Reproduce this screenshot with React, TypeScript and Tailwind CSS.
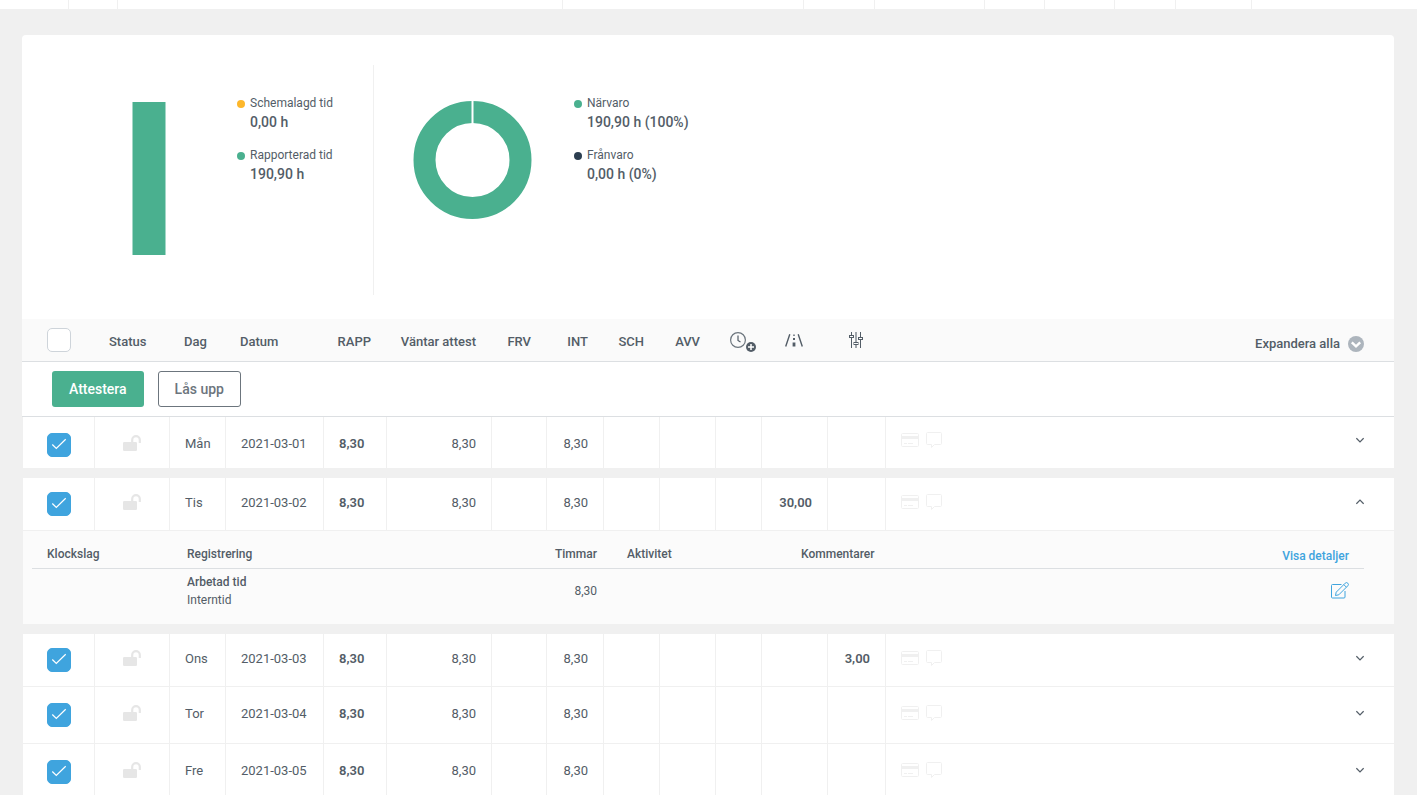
import { useState } from 'react';
import type { ReactNode } from 'react';

interface DayRow {
  id: number;
  day: string;
  date: string;
  reported: string;
  waiting: string;
  internal: string;
  mileage?: string;
  adjustment?: string;
}

const DAYS: DayRow[] = [
  { id: 1, day: 'Mån', date: '2021-03-01', reported: '8,30', waiting: '8,30', internal: '8,30' },
  { id: 2, day: 'Tis', date: '2021-03-02', reported: '8,30', waiting: '8,30', internal: '8,30', mileage: '30,00' },
  { id: 3, day: 'Ons', date: '2021-03-03', reported: '8,30', waiting: '8,30', internal: '8,30', adjustment: '3,00' },
  { id: 4, day: 'Tor', date: '2021-03-04', reported: '8,30', waiting: '8,30', internal: '8,30' },
  { id: 5, day: 'Fre', date: '2021-03-05', reported: '8,30', waiting: '8,30', internal: '8,30' },
];

const COLUMN_WIDTHS = [
  'w-[73px]', 'w-[75px]', 'w-[56px]', 'w-[98px]', 'w-[63px]', 'w-[105px]', 'w-[55px]',
  'w-[57px]', 'w-[56px]', 'w-[56px]', 'w-[46px]', 'w-[66px]', 'w-[58px]', '',
];

// Columns of the table that ends above the panel
const TOP_COLUMNS = [
  'w-[69px]', 'w-[49px]', 'w-[445px]', 'w-[241px]', 'w-[71px]',
  'w-[110px]', 'w-[60px]', 'w-[70px]', 'w-[61px]', 'w-[76px]',
];

export default function App() {
  const [selected, setSelected] = useState<number[]>(DAYS.map(d => d.id));
  const [openId, setOpenId] = useState<number | null>(2);
  const openIndex = DAYS.findIndex(d => d.id === openId);

  const toggleSelected = (id: number) => {
    setSelected(prev => prev.includes(id) ? prev.filter(s => s !== id) : [...prev, id]);
  };

  return (
    <div className="h-screen overflow-hidden bg-[#f0f0f0] font-['Roboto',sans-serif] text-[13px] leading-[22px] text-[#535d67]">
      <div className="flex h-[9px] bg-white">
        {TOP_COLUMNS.map((width, i) => (
          <div key={i} className={`${width} shrink-0 border-r border-[#f0f0f0]`} />
        ))}
      </div>

      <main className="mx-[22px] mt-[26px] mr-[23px] rounded-t bg-white">
        {/* Summary */}
        <section className="flex pt-[30px] pb-6">
          <div className="flex h-[230px] w-[352px] items-start gap-[71px] border-r border-[#f0f0f0] pt-[37px] pl-[110px]">
            <svg width="34" height="153" aria-label="Rapporterad tid">
              <rect x=".5" width="33" height="153" fill="#4ab08f" />
            </svg>
            <Legend items={[
              { color: 'bg-[#fdb72b]', label: 'Schemalagd tid', value: '0,00 h' },
              { color: 'bg-[#4ab08f]', label: 'Rapporterad tid', value: '190,90 h' },
            ]} />
          </div>
          <div className="flex items-start gap-[42px] pt-[37px] pl-[39px]">
            <svg width="119" height="118" viewBox="0 0 119 118" className="overflow-visible" aria-label="Närvaro">
              <circle cx="59.5" cy="58" r="48" fill="none" stroke="#4ab08f" strokeWidth="22" />
              <path d="M59.5-2v25" stroke="#fff" strokeWidth="2" />
            </svg>
            <Legend items={[
              { color: 'bg-[#4ab08f]', label: 'Närvaro', value: '190,90 h (100%)' },
              { color: 'bg-[#2c3e50]', label: 'Frånvaro', value: '0,00 h (0%)' },
            ]} />
          </div>
        </section>

        <table className="w-full table-fixed border-separate border-spacing-0 text-left">
          <colgroup>
            {COLUMN_WIDTHS.map((width, i) => <col key={i} className={width} />)}
          </colgroup>
          <thead>
            <tr>
              <HeadCell icon>
                <div className="pl-[11px]">
                  <Checkbox
                    label="Markera alla"
                    checked={false}
                    onChange={() => setSelected(selected.length === DAYS.length ? [] : DAYS.map(d => d.id))}
                  />
                </div>
              </HeadCell>
              <HeadCell>Status</HeadCell>
              <HeadCell>Dag</HeadCell>
              <HeadCell>Datum</HeadCell>
              <HeadCell right>RAPP</HeadCell>
              <HeadCell right>Väntar attest</HeadCell>
              <HeadCell right>FRV</HeadCell>
              <HeadCell right>INT</HeadCell>
              <HeadCell right>SCH</HeadCell>
              <HeadCell right>AVV</HeadCell>
              <HeadCell icon><ClockPlusIcon /></HeadCell>
              <HeadCell icon><div className="flex justify-center"><RoadIcon /></div></HeadCell>
              <HeadCell icon><div className="flex justify-center"><SlidersIcon /></div></HeadCell>
              <th className="h-[43px] border-b border-[#dcdfe2] bg-[#fafafa] pt-[7px] pr-[30px]">
                <button className="ml-auto flex items-center gap-2 font-medium">
                  Expandera alla
                  <svg width="16" height="16" viewBox="0 0 16 16" fill="none">
                    <circle cx="8" cy="8" r="8" fill="#adb5bd" />
                    <path d="M3.8 6.3L8 10.400l4.200-4.100" stroke="#fff" strokeWidth="2.4" />
                  </svg>
                </button>
              </th>
            </tr>
            <tr>
              <td colSpan={14} className="h-[55px] border-b border-[#dcdfe2] pl-[30px]">
                <div className="flex gap-[14px] text-sm font-medium">
                  <button className="h-9 rounded-[3px] bg-[#4ab08f] px-[17px] pb-px text-white">Attestera</button>
                  <button className="h-9 rounded-[3px] border border-[#6c757d] px-4 pb-px text-[#6c757d]">Lås upp</button>
                </div>
              </td>
            </tr>
          </thead>

          {DAYS.map((row, index) => (
            <tbody key={row.id}>
              {index === openIndex && <GapRow />}
              <DayCells
                row={row}
                checked={selected.includes(row.id)}
                open={index === openIndex}
                beforeOpen={index === openIndex - 1}
                afterOpen={openIndex >= 0 && index === openIndex + 1}
                onCheck={() => toggleSelected(row.id)}
                onToggle={() => setOpenId(row.id === openId ? null : row.id)}
              />
              {index === openIndex && <DetailRow />}
              {index === openIndex && <GapRow />}
            </tbody>
          ))}
        </table>
      </main>
    </div>
  );
}

function Legend({ items }: { items: { color: string; label: string; value: string }[] }) {
  return (
    <ul className="-mt-2 space-y-[14px]">
      {items.map(item => (
        <li key={item.label}>
          <p className="flex items-center gap-[5px] text-xs leading-[19px]">
            <span className={`size-2 rounded-full ${item.color}`} />
            {item.label}
          </p>
          <p className="pl-[13px] text-sm leading-[19px] font-medium">{item.value}</p>
        </li>
      ))}
    </ul>
  );
}

function HeadCell({ children, right, icon }: { children: ReactNode; right?: boolean; icon?: boolean }) {
  return (
    <th className={`h-[43px] border-b border-[#dcdfe2] bg-[#fafafa] font-medium whitespace-nowrap ${right ? 'pr-4 text-right' : 'px-[14px]'} ${icon ? '' : 'pt-1'}`}>
      {children}
    </th>
  );
}

interface DayCellsProps {
  row: DayRow;
  checked: boolean;
  open: boolean;
  beforeOpen: boolean;
  afterOpen: boolean;
  onCheck: () => void;
  onToggle: () => void;
}

function DayCells({ row, checked, open, beforeOpen, afterOpen, onCheck, onToggle }: DayCellsProps) {
  const compact = open || afterOpen;
  const height = beforeOpen ? 'h-[51px]' : compact ? 'h-[53px] border-b' : 'h-[57px] border-b';
  const padding = compact ? 'pt-[14px]' : 'pt-4';
  const cell = `${height} ${padding} border-r border-[#f0f0f0] px-[15px] align-top`;

  return (
    <tr>
      <td className={`${cell} border-l`}>
        <div className="pl-[9px]">
          <Checkbox label={`Markera ${row.date}`} checked={checked} onChange={onCheck} />
        </div>
      </td>
      <td className={cell}><div className="flex justify-center pt-[2px]"><UnlockIcon /></div></td>
      <td className={cell}>{row.day}</td>
      <td className={cell}>{row.date}</td>
      <td className={`${cell} font-semibold`}>{row.reported}</td>
      <td className={`${cell} text-right`}>{row.waiting}</td>
      <td className={cell} />
      <td className={`${cell} text-right`}>{row.internal}</td>
      <td className={cell} />
      <td className={cell} />
      <td className={cell} />
      <td className={`${cell} text-right font-semibold`}>{row.mileage}</td>
      <td className={`${cell} text-right font-semibold`}>{row.adjustment}</td>
      <td className={`${height} ${beforeOpen ? 'pt-[13px]' : padding} border-[#f0f0f0] pr-[30px] pl-[15px] align-top`}>
        <div className="flex h-5 items-center gap-[7px]">
          <CardIcon />
          <CommentIcon />
          <button className="ml-auto" onClick={onToggle} aria-expanded={open} aria-label={`Visa ${row.date}`}>
            <svg width="8" height="6" viewBox="0 0 8 6" fill="none" stroke="#535d67" strokeWidth="1.2">
              <path d={open ? 'M.4 4.8L4 1.200l3.600 3.600' : 'M.4 1.200L4 4.800l3.600-3.600'} />
            </svg>
          </button>
        </div>
      </td>
    </tr>
  );
}

function GapRow() {
  return (
    <tr>
      <td colSpan={14} className="h-[10px] bg-[#f0f0f0] p-0" />
    </tr>
  );
}

function DetailRow() {
  return (
    <tr>
      <td colSpan={14} className="h-[93px] border-l border-[#f0f0f0] bg-[#fbfbfb] pr-[30px] pl-[9px] align-top text-xs leading-[18px]">
        <table className="w-full table-fixed border-separate border-spacing-0">
          <colgroup>
            <col className="w-[140px]" />
            <col className="w-[300px]" />
            <col className="w-[140px]" />
            <col className="w-[174px]" />
            <col />
            <col className="w-[140px]" />
          </colgroup>
          <thead>
            <tr className="*:h-[38px] *:border-b *:border-[#dcdfe2] *:px-[15px] *:pt-2 *:font-medium">
              <th>Klockslag</th>
              <th>Registrering</th>
              <th className="text-right">Timmar</th>
              <th>Aktivitet</th>
              <th>Kommentarer</th>
              <th className="pb-[3px] text-right align-bottom">
                <a href="#detaljer" className="text-[#3fa4de]">Visa detaljer</a>
              </th>
            </tr>
          </thead>
          <tbody>
            <tr className="*:px-[15px] *:pt-1">
              <td />
              <td>
                <p className="font-medium">Arbetad tid</p>
                <p>Interntid</p>
              </td>
              <td className="text-right">8,30</td>
              <td />
              <td />
              <td>
                <button className="ml-auto block pb-px" aria-label="Redigera"><EditIcon /></button>
              </td>
            </tr>
          </tbody>
        </table>
      </td>
    </tr>
  );
}

function Checkbox({ label, checked, onChange }: { label: string; checked: boolean; onChange: () => void }) {
  return (
    <label className="grid size-6 place-items-center">
      <input type="checkbox" aria-label={label} checked={checked} onChange={onChange}
        className="[grid-area:1/1] size-6 appearance-none rounded-[5px] border border-[#ced4da] bg-white checked:border-[#3fa4de] checked:bg-[#3fa4de]" />
      {checked && (
        <svg className="pointer-events-none z-10 [grid-area:1/1]" width="16" height="14" viewBox="0 0 16 14" fill="none">
          <path d="M1.3 6.500l4 4L14.700 1.200" stroke="#fff" strokeWidth="1.2" />
        </svg>
      )}
    </label>
  );
}

function UnlockIcon() {
  return (
    <svg width="18" height="16" viewBox="0 0 18 16" fill="none">
      <rect y="7" width="14" height="9" rx="1.2" fill="#e6e6e6" />
      <path d="M9.2 7.5V4.9a3.8 3.8 0 0 1 7.6 0v3" stroke="#e6e6e6" strokeWidth="2.2" />
    </svg>
  );
}

function CardIcon() {
  return (
    <svg width="18" height="14" viewBox="0 0 18 14" fill="none" stroke="#f0f0f0">
      <rect x=".5" y=".5" width="17" height="13" rx="1" />
      <path d="M0 4.500h18" strokeWidth="3" />
      <path d="M3 10.500h3M7 10.500h5" />
    </svg>
  );
}

function CommentIcon() {
  return (
    <svg width="16" height="16" viewBox="0 0 16 16" fill="none" stroke="#f0f0f0">
      <path d="M1.5.5h13a1 1 0 0 1 1 1v10a1 1 0 0 1-1 1H8.500l-3 3v-3h-4a1 1 0 0 1-1-1v-10a1 1 0 0 1 1-1z" />
    </svg>
  );
}

function ClockPlusIcon() {
  return (
    <svg width="26" height="20" viewBox="0 0 26 20" fill="none" className="mt-[3px]">
      <circle cx="8" cy="8" r="7.400" stroke="#6c757d" strokeWidth="1.2" />
      <path d="M8 3.500v5l2.500 1.500" stroke="#535d67" strokeWidth="1.200" />
      <circle cx="21" cy="15" r="5" fill="#535d67" />
      <path d="M21 12v6M18 15h6" stroke="#fff" strokeWidth="1.500" />
    </svg>
  );
}

function RoadIcon() {
  return (
    <svg width="20" height="13" viewBox="0 0 20 13" fill="none" stroke="#535d67">
      <path d="M4.800.300L.700 12.500M13.200.300l4.100 12.200" strokeWidth="1.400" />
      <path d="M9 .500v1.500" strokeWidth="1.400" />
      <path d="M9 4v2" strokeWidth="2" />
      <path d="M9 8.500v4" strokeWidth="2.800" />
    </svg>
  );
}

function SlidersIcon() {
  return (
    <svg width="16" height="16" viewBox="0 0 16 16" fill="none" stroke="#535d67">
      <path d="M2.500 0v3M2.500 6v10M11.500 0v5M11.500 8v8" />
      <path d="M7 0v10M7 13v3" strokeWidth="1.600" stroke="#8b9299" />
      <rect x=".5" y="3.500" width="4" height="2" />
      <rect x="9.500" y="5.500" width="4" height="2" />
      <rect x="5" y="10.500" width="4" height="2" />
    </svg>
  );
}

function EditIcon() {
  return (
    <svg width="18" height="17" viewBox="0 0 18 17" fill="none" stroke="#3fa4de">
      <path d="M10.500 2.500h-9a1 1 0 0 0-1 1v11.500a1 1 0 0 0 1 1h11.500a1 1 0 0 0 1-1v-6" />
      <path d="M4.500 13.500l.700-3.300 9-9a1.500 1.500 0 0 1 2.600 2.600l-9 9zM12.800 2.600l2.600 2.600" />
    </svg>
  );
}
